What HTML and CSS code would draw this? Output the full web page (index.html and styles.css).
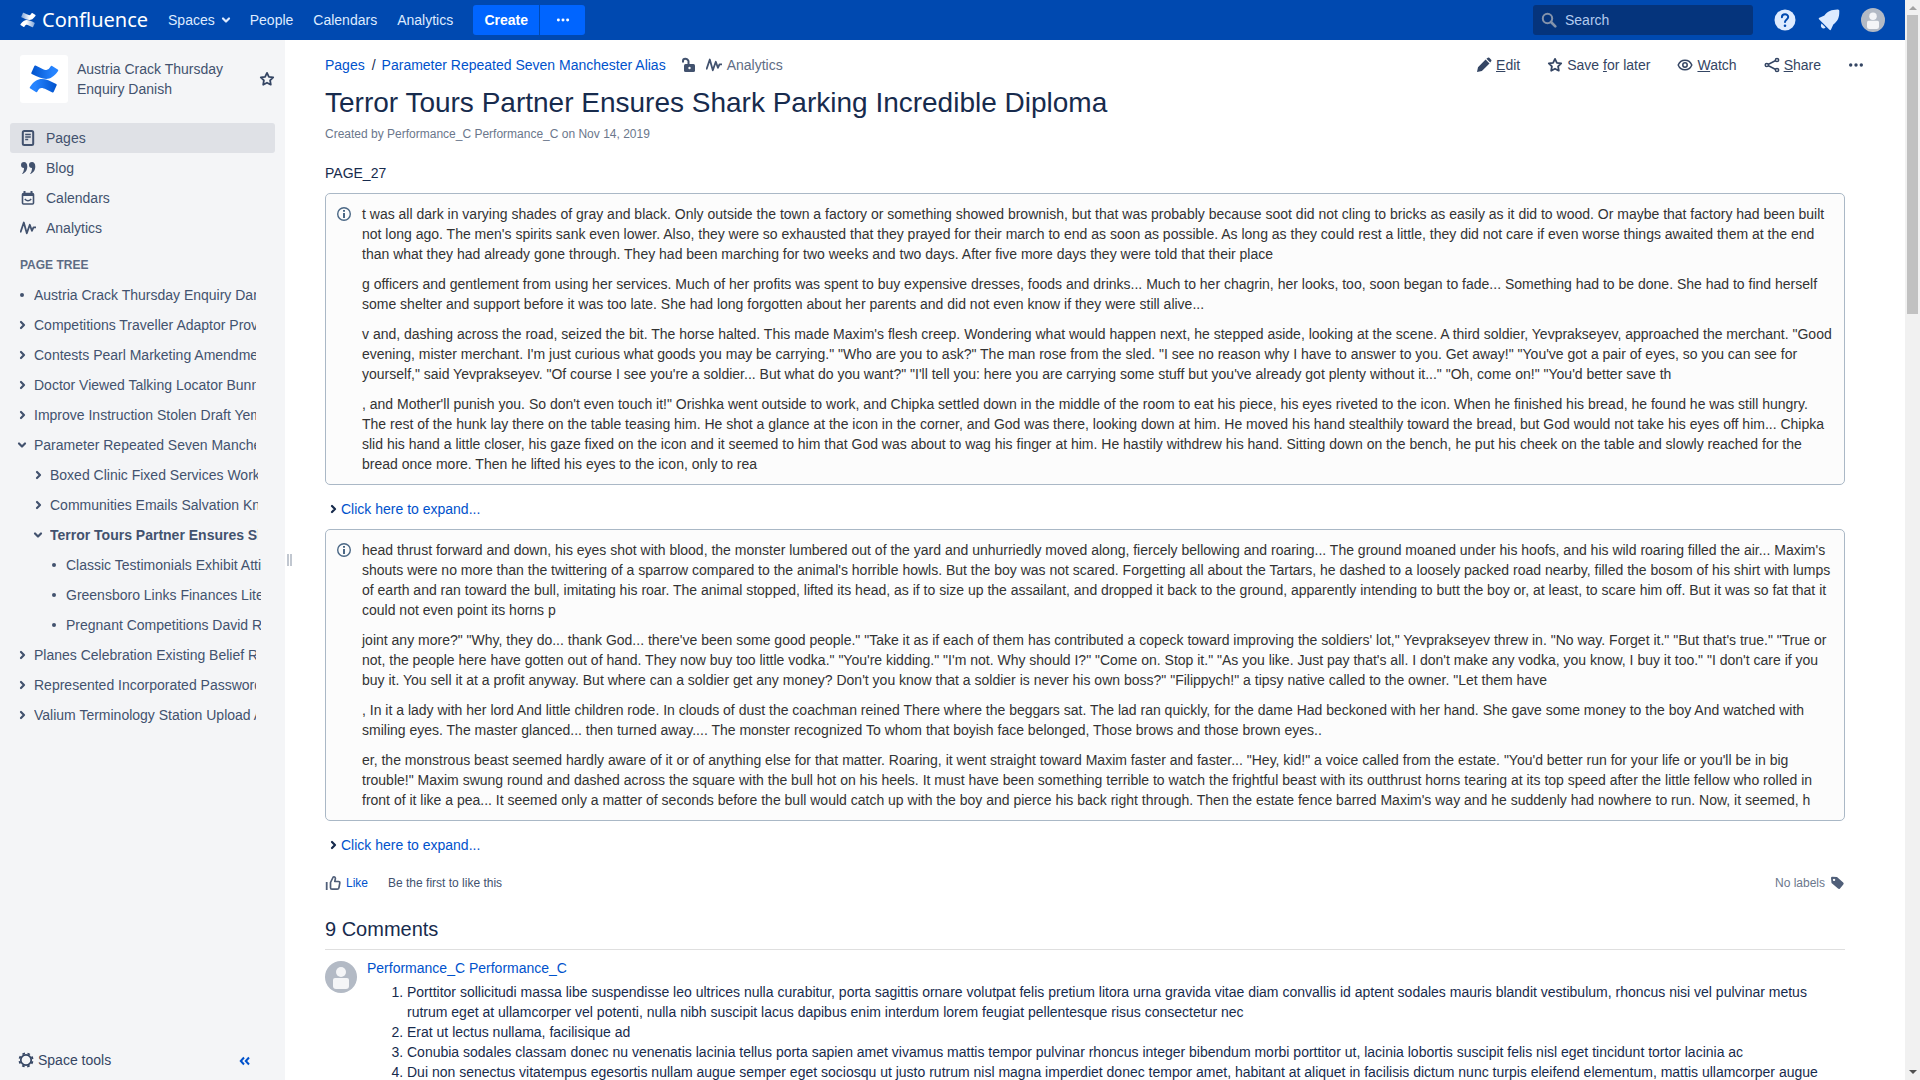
FILE: index.html
```html
<!DOCTYPE html>
<html lang="en">
<head>
<meta charset="utf-8">
<title>Terror Tours Partner Ensures Shark Parking Incredible Diploma - Confluence</title>
<link rel="stylesheet" href="styles.css">
</head>
<body>
<svg class="sprite" aria-hidden="true">
  <symbol id="chevron" viewBox="0 0 12 10"><path d="M5 2L8 5 5 8" fill="none" stroke="currentColor" stroke-width="2.200" stroke-linecap="round" stroke-linejoin="round"/></symbol>
  <symbol id="chevron-down" viewBox="0 0 12 10"><path d="M3 3.500L6 6.500 9 3.500" fill="none" stroke="currentColor" stroke-width="2.200" stroke-linecap="round" stroke-linejoin="round"/></symbol>
  <symbol id="star" viewBox="0 0 16 16"><path d="M8 1.900l1.900 3.900 4.300.6-3.100 3 .7 4.300L8 11.700l-3.800 2 .7-4.300-3.100-3 4.300-.6z" fill="none" stroke="currentColor" stroke-width="1.800" stroke-linejoin="round"/></symbol>
  <symbol id="pulse" viewBox="0 0 16 16"><path d="M.7 11.700L3.800 2.500l3 10.800L9.800 4.800l2.100 6 1.600-3.400h2" fill="none" stroke="currentColor" stroke-width="1.800" stroke-linejoin="round" stroke-linecap="round"/></symbol>
  <symbol id="dots" viewBox="0 0 16 16"><g fill="currentColor"><circle cx="2.700" cy="8" r="1.700"/><circle cx="8" cy="8" r="1.700"/><circle cx="13.300" cy="8" r="1.700"/></g></symbol>
  <symbol id="avatar" viewBox="0 0 32 32"><circle cx="16" cy="16" r="16" fill="#b3bac5"/><circle cx="16" cy="11" r="5" fill="#f4f5f7"/><path d="M8 19q0-2 2-2h12q2 0 2 2v6q0 3-3 3H11q-3 0-3-3z" fill="#f4f5f7"/></symbol>
  <symbol id="info" viewBox="0 0 16 16"><circle cx="8" cy="8" r="6.300" fill="none" stroke="#4a6785" stroke-width="1.400"/><path d="M7 4h2v1.800H7zM7 7h2v5H7z" fill="#4a6785"/></symbol>
  <symbol id="confluence-mark" viewBox="0 0 32 32"><path d="M1.200 24.200c-.3.500-.6 1.100-.2 1.700l6.300 4c.5.300 1.200.2 1.500-.4 2.600-4.400 4.300-4.800 9.700-2.200l6.500 3c.6.300 1.200 0 1.400-.6l3.100-7c.2-.5 0-1.200-.5-1.400C16.300 15 9.500 12.700 1.200 24.200z" fill="url(#mark-low)"/><path d="M30.800 7.800c.3-.5.600-1.100.2-1.700l-6.300-4c-.5-.3-1.200-.2-1.500.4-2.600 4.400-4.300 4.800-9.700 2.200L7 1.700c-.6-.3-1.200 0-1.400.6l-3.100 7c-.2.500 0 1.200.5 1.400C15.700 17 22.500 19.300 30.800 7.800z" fill="url(#mark-high)"/></symbol>
  <linearGradient id="mark-low" x1="1" y1="0" x2="0" y2="0"><stop offset="0" stop-color="var(--mark-deep)"/><stop offset=".8" stop-color="var(--mark-light)"/></linearGradient>
  <linearGradient id="mark-high" x1="0" y1="0" x2="1" y2="0"><stop offset="0" stop-color="var(--mark-deep)"/><stop offset=".8" stop-color="var(--mark-light)"/></linearGradient>
</svg>

<div class="app">
<div class="page">
  <header class="topbar">
    <a class="brand" href="#">
      <svg class="brand-mark" viewBox="0 0 32 32"><defs><linearGradient id="w1"><stop offset="0" stop-color="#fff" stop-opacity=".5"/><stop offset=".6" stop-color="#fff"/></linearGradient><linearGradient id="w2" x1="1" x2="0"><stop offset="0" stop-color="#fff" stop-opacity=".5"/><stop offset=".6" stop-color="#fff"/></linearGradient></defs><path d="M1.200 24.200c-.3.500-.6 1.100-.2 1.700l6.300 4c.5.300 1.200.2 1.500-.4 2.600-4.400 4.300-4.800 9.700-2.200l6.500 3c.6.300 1.200 0 1.400-.6l3.100-7c.2-.5 0-1.200-.5-1.400C16.300 15 9.500 12.700 1.200 24.200z" fill="url(#w2)"/><path d="M30.800 7.800c.3-.5.600-1.100.2-1.700l-6.300-4c-.5-.3-1.200-.2-1.500.4-2.600 4.400-4.300 4.800-9.700 2.200L7 1.700c-.6-.3-1.200 0-1.400.6l-3.100 7c-.2.500 0 1.200.5 1.400C15.700 17 22.500 19.300 30.800 7.800z" fill="url(#w1)"/></svg>
      <span>Confluence</span>
    </a>
    <nav class="topnav">
      <a href="#">Spaces <svg class="mark"><use href="#chevron-down"/></svg></a>
      <a href="#">People</a>
      <a href="#">Calendars</a>
      <a href="#">Analytics</a>
    </nav>
    <div class="create">
      <button class="create-main" type="button">Create</button>
      <button class="create-more" type="button" aria-label="Create from template"><svg class="icon"><use href="#dots"/></svg></button>
    </div>
    <div class="tools">
      <label class="search">
        <svg class="icon" viewBox="0 0 16 16"><circle cx="6.500" cy="6.500" r="4.700" fill="none" stroke="currentColor" stroke-width="2"/><path d="M10 10l4.300 4.300" stroke="currentColor" stroke-width="2.600" stroke-linecap="round"/></svg>
        <input type="search" placeholder="Search" aria-label="Search">
      </label>
      <button class="tool" type="button" aria-label="Help"><svg viewBox="0 0 24 24"><circle cx="12" cy="12" r="10.500" fill="#deebff"/><path d="M8.900 9.300c0-4 6.300-4 6.300-.2 0 2.300-3.200 2.400-3.200 5" fill="none" stroke="#0049b0" stroke-width="2" stroke-linecap="round"/><circle cx="12" cy="17.700" r="1.300" fill="#0049b0"/></svg></button>
      <button class="tool" type="button" aria-label="Notifications"><svg viewBox="0 0 24 24"><path d="M2 11.200c-.5-.6-.3-1.200.4-1.500l5-2.200C10.500 3 14.500 1.700 20.500 1.500c1.200-.2 2 .6 1.800 1.800.1 6-1.500 10-6 13.100L14 21.500c-.3.800-1 .9-1.500.3zM4.600 15.500l4 4c-1.200 1.400-3 1.300-3.800.3-1-1-1.300-2.800-.2-4.300z" fill="#deebff"/></svg></button>
      <button class="tool" type="button" aria-label="Profile"><svg><use href="#avatar"/></svg></button>
    </div>
  </header>

  <div class="body">
    <aside class="sidebar">
      <div class="space">
        <a class="space-logo" href="#" aria-label="Space home"><svg><use href="#confluence-mark"/></svg></a>
        <a class="space-name" href="#">Austria Crack Thursday Enquiry Danish</a>
        <button class="plain" type="button" aria-label="Add to My Spaces"><svg class="icon"><use href="#star"/></svg></button>
      </div>
      <nav class="sections">
        <a class="current" href="#"><svg class="icon" viewBox="0 0 16 16"><rect x="2.800" y="1" width="10.400" height="14" rx="1.500" fill="none" stroke="currentColor" stroke-width="2"/><path d="M5.200 4.500h5.600M5.200 7h5.600M5.200 9.500h3" stroke="currentColor" stroke-width="1.300"/></svg>Pages</a>
        <a href="#"><svg class="icon" viewBox="0 0 16 16"><path d="M1 5a3 3 0 0 1 3-3c2 0 3.300 1.600 3.300 4.500C7.300 10.500 5 13.300 2 14c1.200-1.500 2-3.500 2-6a3 3 0 0 1-3-3zM9 5a3 3 0 0 1 3-3c2 0 3.300 1.600 3.300 4.500 0 4-2.300 6.800-5.300 7.500 1.200-1.500 2-3.500 2-6a3 3 0 0 1-3-3z" fill="currentColor"/></svg>Blog</a>
        <a href="#"><svg class="icon" viewBox="0 0 16 16"><rect x="2.500" y="3.500" width="11" height="10.500" rx="1" fill="none" stroke="currentColor" stroke-width="1.600"/><path d="M2.500 5h11M4.500 1v3M11.500 1v3" stroke="currentColor" stroke-width="2"/><path d="M4.800 9q3.200 3.600 6.400 0" fill="none" stroke="currentColor" stroke-width="1.500"/></svg>Calendars</a>
        <a href="#"><svg class="icon"><use href="#pulse"/></svg>Analytics</a>
      </nav>
      <h2 class="tree-title">Page tree</h2>
      <ul class="tree">
        <li><span class="mark dot"></span><a href="#">Austria Crack Thursday Enquiry Danish</a></li>
        <li><svg class="mark"><use href="#chevron"/></svg><a href="#">Competitions Traveller Adaptor Provided</a></li>
        <li><svg class="mark"><use href="#chevron"/></svg><a href="#">Contests Pearl Marketing Amendment</a></li>
        <li><svg class="mark"><use href="#chevron"/></svg><a href="#">Doctor Viewed Talking Locator Bunny</a></li>
        <li><svg class="mark"><use href="#chevron"/></svg><a href="#">Improve Instruction Stolen Draft Yemen</a></li>
        <li><svg class="mark"><use href="#chevron-down"/></svg><a href="#">Parameter Repeated Seven Manchester Alias</a></li>
        <li class="level-2"><svg class="mark"><use href="#chevron"/></svg><a href="#">Boxed Clinic Fixed Services Workshop</a></li>
        <li class="level-2"><svg class="mark"><use href="#chevron"/></svg><a href="#">Communities Emails Salvation Knowing</a></li>
        <li class="level-2"><svg class="mark"><use href="#chevron-down"/></svg><a class="here" href="#">Terror Tours Partner Ensures Shark</a></li>
        <li class="level-3"><span class="mark dot"></span><a href="#">Classic Testimonials Exhibit Attitude</a></li>
        <li class="level-3"><span class="mark dot"></span><a href="#">Greensboro Links Finances Literacy</a></li>
        <li class="level-3"><span class="mark dot"></span><a href="#">Pregnant Competitions David Rapids</a></li>
        <li><svg class="mark"><use href="#chevron"/></svg><a href="#">Planes Celebration Existing Belief Rated</a></li>
        <li><svg class="mark"><use href="#chevron"/></svg><a href="#">Represented Incorporated Passwords</a></li>
        <li><svg class="mark"><use href="#chevron"/></svg><a href="#">Valium Terminology Station Upload Aims</a></li>
      </ul>
      <div class="sidebar-foot">
        <button class="plain" type="button"><svg class="icon" viewBox="0 0 16 16"><circle cx="8" cy="8" r="5.200" fill="none" stroke="currentColor" stroke-width="1.700"/><circle cx="8" cy="8" r="6.600" fill="none" stroke="currentColor" stroke-width="1.800" stroke-dasharray="2.600 2.584" stroke-dashoffset="-1.300"/></svg>Space tools</button>
        <button class="plain collapse" type="button" aria-label="Collapse sidebar"><svg viewBox="0 0 12 10"><path d="M5 1.500L1.800 5 5 8.500M10 1.500L6.800 5 10 8.500" fill="none" stroke="currentColor" stroke-width="2"/></svg></button>
      </div>
    </aside>
    <div class="splitter"><span></span></div>

    <main class="content">
      <div class="page-head">
        <nav class="crumbs">
          <a href="#">Pages</a><span>/</span><a href="#">Parameter Repeated Seven Manchester Alias</a>
          <button class="plain lock" type="button" aria-label="Unrestricted"><svg class="icon" viewBox="0 0 16 16"><rect x="4" y="7" width="11" height="8" rx="1.500" fill="currentColor"/><path d="M3 5.500V4q0-2.300 2.300-2.300T8.500 4v4" fill="none" stroke="currentColor" stroke-width="2"/><circle cx="9.500" cy="11" r="1.200" fill="#fff"/></svg></button>
          <button class="plain stats" type="button"><svg class="icon"><use href="#pulse"/></svg>Analytics</button>
        </nav>
        <div class="actions">
          <button class="plain" type="button"><svg class="icon" viewBox="0 0 16 16"><path d="M1 15l1-4.800 7.600-7.600 3.900 3.900-7.600 7.600zM10.400 1.800l1.400-1q.8-.6 1.500 0l1.900 1.900q.6.700 0 1.500l-1 1.400z" fill="currentColor"/></svg><span><u>E</u>dit</span></button>
          <button class="plain" type="button"><svg class="icon"><use href="#star"/></svg><span>Save <u>f</u>or later</span></button>
          <button class="plain" type="button"><svg class="icon" viewBox="0 0 16 16"><path d="M1.200 8C3.800 1.600 12.200 1.600 14.800 8 12.200 14.400 3.800 14.400 1.200 8z" fill="none" stroke="currentColor" stroke-width="1.500"/><circle cx="8" cy="8" r="2.200" fill="none" stroke="currentColor" stroke-width="1.500"/></svg><span><u>W</u>atch</span></button>
          <button class="plain" type="button"><svg class="icon" viewBox="0 0 16 16"><path d="M12.700 3L3 8l9.700 5" fill="none" stroke="currentColor" stroke-width="1.500"/><g fill="#fff" stroke="currentColor" stroke-width="1.500"><circle cx="13" cy="3" r="1.600"/><circle cx="2.800" cy="8" r="1.600"/><circle cx="13" cy="13" r="1.600"/></g></svg><span><u>S</u>hare</span></button>
          <button class="plain" type="button" aria-label="More actions"><svg class="icon"><use href="#dots"/></svg></button>
        </div>
      </div>
      <h1>Terror Tours Partner Ensures Shark Parking Incredible Diploma</h1>
      <p class="byline">Created by Performance_C Performance_C on Nov 14, 2019</p>

      <p class="lead">PAGE_27</p>
      <section class="panel">
        <svg class="icon"><use href="#info"/></svg>
        <div class="panel-text">
          <p>t was all dark in varying shades of gray and black. Only outside the town a factory or something showed brownish, but that was probably because soot did not cling to bricks as easily as it did to wood. Or maybe that factory had been built not long ago. The men's spirits sank even lower. Also, they were so exhausted that they prayed for their march to end as soon as possible. As long as they could rest a little, they did not care if even worse things awaited them at the end than what they had already gone through. They had been marching for two weeks and two days. After five more days they were told that their place</p>
          <p>g officers and gentlement from using her services. Much of her profits was spent to buy expensive dresses, foods and drinks... Much to her chagrin, her looks, too, soon began to fade... Something had to be done. She had to find herself some shelter and support before it was too late. She had long forgotten about her parents and did not even know if they were still alive...</p>
          <p>v and, dashing across the road, seized the bit. The horse halted. This made Maxim's flesh creep. Wondering what would happen next, he stepped aside, looking at the scene. A third soldier, Yevprakseyev, approached the merchant. "Good evening, mister merchant. I'm just curious what goods you may be carrying." "Who are you to ask?" The man rose from the sled. "I see no reason why I have to answer to you. Get away!" "You've got a pair of eyes, so you can see for yourself," said Yevprakseyev. "Of course I see you're a soldier... But what do you want?" "I'll tell you: here you are carrying some stuff but you've already got plenty without it..." "Oh, come on!" "You'd better save th</p>
          <p>, and Mother'll punish you. So don't even touch it!" Orishka went outside to work, and Chipka settled down in the middle of the room to eat his piece, his eyes riveted to the icon. When he finished his bread, he found he was still hungry. The rest of the hunk lay there on the table teasing him. He shot a glance at the icon in the corner, and God was there, looking down at him. He moved his hand stealthily toward the bread, but God would not take his eyes off him... Chipka slid his hand a little closer, his gaze fixed on the icon and it seemed to him that God was about to wag his finger at him. He hastily withdrew his hand. Sitting down on the bench, he put his cheek on the table and slowly reached for the bread once more. Then he lifted his eyes to the icon, only to rea</p>
        </div>
      </section>
      <button class="expand" type="button"><svg class="mark"><use href="#chevron"/></svg><span>Click here to expand...</span></button>
      <section class="panel">
        <svg class="icon"><use href="#info"/></svg>
        <div class="panel-text">
          <p>head thrust forward and down, his eyes shot with blood, the monster lumbered out of the yard and unhurriedly moved along, fiercely bellowing and roaring... The ground moaned under his hoofs, and his wild roaring filled the air... Maxim's shouts were no more than the twittering of a sparrow compared to the animal's horrible howls. But the boy was not scared. Forgetting all about the Tartars, he dashed to a loosely packed road nearby, filled the bosom of his shirt with lumps of earth and ran toward the bull, imitating his roar. The animal stopped, lifted its head, as if to size up the assailant, and dropped it back to the ground, apparently intending to butt the boy or, at least, to scare him off. But it was so fat that it could not even point its horns p</p>
          <p>joint any more?" "Why, they do... thank God... there've been some good people." "Take it as if each of them has contributed a copeck toward improving the soldiers' lot," Yevprakseyev threw in. "No way. Forget it." "But that's true." "True or not, the people here have gotten out of hand. They now buy too little vodka." "You're kidding." "I'm not. Why should I?" "Come on. Stop it." "As you like. Just pay that's all. I don't make any vodka, you know, I buy it too." "I don't care if you buy it. You sell it at a profit anyway. But where can a soldier get any money? Don't you know that a soldier is never his own boss?" "Filippych!" a tipsy native called to the owner. "Let them have</p>
          <p>, In it a lady with her lord And little children rode. In clouds of dust the coachman reined There where the beggars sat. The lad ran quickly, for the dame Had beckoned with her hand. She gave some money to the boy And watched with smiling eyes. The master glanced... then turned away.... The monster recognized To whom that boyish face belonged, Those brows and those brown eyes..</p>
          <p>er, the monstrous beast seemed hardly aware of it or of anything else for that matter. Roaring, it went straight toward Maxim faster and faster... "Hey, kid!" a voice called from the estate. "You'd better run for your life or you'll be in big trouble!" Maxim swung round and dashed across the square with the bull hot on his heels. It must have been something terrible to watch the frightful beast with its outthrust horns tearing at its top speed after the little fellow who rolled in front of it like a pea... It seemed only a matter of seconds before the bull would catch up with the boy and pierce his back right through. Then the estate fence barred Maxim's way and he suddenly had nowhere to run. Now, it seemed, h</p>
        </div>
      </section>
      <button class="expand" type="button"><svg class="mark"><use href="#chevron"/></svg><span>Click here to expand...</span></button>

      <div class="feedback">
        <button class="plain like" type="button"><svg class="icon" viewBox="0 0 16 16"><path d="M5.500 7.500L8.200 2q2.200-.6 2.200 1.600L9.800 6.500h3.600q1.600 0 1.400 1.600l-.9 4.700q-.3 1.400-1.700 1.400H7q-1.500 0-1.500-1.500z" fill="none" stroke="currentColor" stroke-width="1.700" stroke-linejoin="round"/><path d="M1.700 7v8" stroke="currentColor" stroke-width="1.800"/></svg><span>Like</span></button>
        <span class="like-note">Be the first to like this</span>
        <span class="labels">No labels</span>
        <button class="plain" type="button" aria-label="Edit labels"><svg class="icon" viewBox="0 0 16 16"><path fill-rule="evenodd" d="M2 3q0-1.300 1.300-1.300L8 2l6.200 5.500q1 1 .1 2L11 13.500q-1 1-2 .1L2.500 8zM5 3.700a1.200 1.200 0 1 0 .1 0z" fill="currentColor"/></svg></button>
      </div>

      <h2 class="comments-title">9 Comments</h2>
      <article class="comment">
        <svg class="comment-avatar"><use href="#avatar"/></svg>
        <div class="comment-text">
          <a href="#">Performance_C Performance_C</a>
          <ol>
            <li>Porttitor sollicitudi massa libe suspendisse leo ultrices nulla curabitur, porta sagittis ornare volutpat felis pretium litora urna gravida vitae diam convallis id aptent sodales mauris blandit vestibulum, rhoncus nisi vel pulvinar metus rutrum eget at ullamcorper vel potenti, nulla nibh suscipit lacus dapibus enim interdum lorem feugiat pellentesque risus consectetur nec</li>
            <li>Erat ut lectus nullama, facilisique ad</li>
            <li>Conubia sodales classam donec nu venenatis lacinia tellus porta sapien amet vivamus mattis tempor pulvinar rhoncus integer bibendum morbi porttitor ut, lacinia lobortis suscipit felis nisl eget tincidunt tortor lacinia ac</li>
            <li>Dui non senectus vitatempus egesortis nullam augue semper eget sociosqu ut justo rutrum nisl magna imperdiet donec tempor amet, habitant at aliquet in facilisis dictum nunc turpis eleifend elementum, mattis ullamcorper augue</li>
          </ol>
        </div>
      </article>
    </main>
  </div>
</div>
<div class="scrollbar" aria-hidden="true"><i class="up"></i><i class="thumb"></i><i class="down"></i></div>
</div>
</body>
</html>
```
FILE: styles.css
```css
:root {
  --navy: #172b4d;
  --slate: #42526e;
  --link: #0052cc;
  --mark-deep: #0052cc;
  --mark-light: #2684ff;
}
* { box-sizing: border-box; }
body {
  margin: 0;
  font: 14px/20px "Liberation Sans", Arial, sans-serif;
  color: var(--navy);
  background: #fff;
}
a { color: var(--link); text-decoration: none; }
button, input { font: inherit; }
h1, h2, p, ul, ol { margin: 0; padding: 0; font-weight: 400; }
svg { display: block; flex: none; }
.sprite { position: absolute; width: 0; height: 0; }
.icon { width: 16px; height: 16px; }
.plain {
  display: flex;
  align-items: center;
  padding: 0;
  border: 0;
  background: none;
  color: #344563;
}

.app { display: flex; height: 100vh; overflow: hidden; }
.page { flex: 1; min-width: 0; display: flex; flex-direction: column; }

/* Top bar */
.topbar {
  flex: none;
  display: flex;
  align-items: center;
  height: 40px;
  padding: 0 20px;
  background: #0049b0;
}
.brand {
  display: flex;
  align-items: center;
  gap: 6px;
  color: #fff;
  font: 20px/30px "Noto Sans", "Open Sans", sans-serif;
}
.brand-mark { width: 16px; height: 18px; }
.topnav { display: flex; gap: 20px; margin-left: 20px; }
.topnav a { display: flex; align-items: center; gap: 5px; color: #deebff; }
.topnav .mark { margin-right: -2px; }
.create { display: flex; gap: 1px; margin-left: 20px; }
.create button {
  display: flex;
  align-items: center;
  justify-content: center;
  height: 30px;
  padding: 0;
  border: 0;
  background: #0065ff;
  color: #fff;
  font-weight: 700;
}
.create-main { width: 66px; border-radius: 3px 0 0 3px; }
.create-more { width: 45px; border-radius: 0 3px 3px 0; }
.create .icon { width: 14px; height: 14px; }
.tools { display: flex; align-items: center; gap: 20px; margin-left: auto; }
.search {
  display: flex;
  align-items: center;
  gap: 8px;
  width: 220px;
  height: 30px;
  padding: 0 8px;
  border-radius: 3px;
  background: #05347c;
  color: #8493ab;
}
.search input {
  flex: 1;
  min-width: 0;
  padding: 0;
  border: 0;
  outline: 0;
  background: none;
  color: #deebff;
}
.search input::placeholder { color: #b3cbef; }
.tool { width: 24px; height: 24px; padding: 0; border: 0; background: none; }
.tool svg { width: 24px; height: 24px; }

.body { flex: 1; min-height: 0; display: flex; }

/* Sidebar */
.sidebar {
  flex: none;
  display: flex;
  flex-direction: column;
  width: 285px;
  padding: 15px 10px 10px;
  background: #f4f5f7;
  color: var(--slate);
}
.sidebar a { color: var(--slate); }
.space { display: flex; align-items: center; padding: 0 0 0 10px; }
.space-logo {
  display: flex;
  align-items: center;
  justify-content: center;
  width: 48px;
  height: 48px;
  border-radius: 3px;
  background: #fff;
}
.space-logo svg { width: 30px; height: 30px; }
.space-name { flex: 1; padding: 0 20px 0 9px; }
.sections { margin-top: 20px; }
.sections a {
  display: flex;
  align-items: center;
  gap: 10px;
  height: 30px;
  padding: 0 10px;
  border-radius: 3px;
}
.sections .current { background: #dfe1e6; }
.tree-title {
  margin: 12px 0 5px;
  padding: 0 10px;
  color: #5e6c84;
  font-size: 12px;
  font-weight: 700;
  text-transform: uppercase;
}
.tree { list-style: none; }
.tree li {
  display: flex;
  align-items: center;
  gap: 6px;
  height: 30px;
  padding: 0 19px 0 6px;
}
.tree .level-2 { padding: 0 17px 0 22px; }
.tree .level-3 { padding: 0 14px 0 38px; }
.tree a { flex: 1; min-width: 0; overflow: hidden; white-space: nowrap; }
.tree .here { font-weight: 700; }
.mark { width: 12px; height: 10px; }
.dot { flex: none; display: flex; align-items: center; justify-content: center; }
.dot::before { content: ""; width: 4px; height: 4px; border-radius: 50%; background: var(--slate); }
.sidebar-foot {
  display: flex;
  align-items: center;
  justify-content: space-between;
  margin-top: auto;
  padding: 0 24px 0 8px;
}
.sidebar-foot .plain { gap: 4px; }
.sidebar-foot .collapse { padding-top: 2px; color: var(--link); }
.collapse svg { width: 12px; height: 10px; }
.splitter { flex: none; display: flex; align-items: center; width: 10px; padding-left: 2px; }
.splitter span {
  width: 5px;
  height: 12px;
  border: solid #c1c7d0;
  border-width: 0 2px;
}

/* Page */
.content { flex: 1; min-width: 0; overflow: hidden; padding: 15px 60px 0 30px; }
.page-head { display: flex; justify-content: space-between; margin-right: -19px; }
.crumbs { display: flex; align-items: center; }
.crumbs > span { padding: 0 6px 0 7px; }
.crumbs .lock { margin-left: 14px; color: var(--slate); }
.crumbs .stats { gap: 5px; margin-left: 10px; color: #5e6c84; }
.stats .icon { color: var(--slate); }
.actions { display: flex; gap: 27px; }
.actions .plain { gap: 4px; }
h1 { margin-top: 12px; font-size: 28px; line-height: 32px; }
.byline { margin-top: 5px; color: #6b778c; font-size: 12px; }
.lead { margin-top: 19px; }
.panel {
  display: flex;
  gap: 10px;
  margin-top: 10px;
  padding: 10px;
  border: 1px solid #aab8c6;
  border-radius: 5px;
  background: #fcfcfc;
  color: #333;
}
.panel .icon { margin-top: 2px; }
.panel-text { display: grid; gap: 10px; }
.expand {
  display: flex;
  align-items: center;
  gap: 2px;
  margin-top: 14px;
  padding: 0 0 0 2px;
  border: 0;
  background: none;
  color: var(--navy);
}
.expand span { color: var(--link); }
.feedback { display: flex; align-items: center; margin-top: 18px; font-size: 12px; }
.feedback .plain { color: #505f79; }
.like { gap: 5px; }
.like span { color: var(--link); }
.like-note { margin-left: 20px; color: var(--slate); }
.labels { margin: 0 4px 0 auto; color: #6b778c; }
.comments-title {
  margin-top: 24px;
  padding-bottom: 8px;
  border-bottom: 1px solid #dfdfdf;
  font-size: 20px;
  line-height: 24px;
}
.comment { display: flex; gap: 10px; padding-top: 8px; }
.comment-avatar { width: 32px; height: 32px; margin-top: 3px; }
.comment ol { margin-top: 4px; padding-left: 40px; }

/* Scroll bar */
.scrollbar {
  flex: none;
  display: flex;
  flex-direction: column;
  align-items: center;
  width: 15px;
  padding: 6px 0;
  background: #f1f1f1;
}
.up, .down { border: solid transparent; border-width: 0 4px; }
.up { border-bottom: 4px solid #a3a3a3; }
.down { margin-top: auto; border-top: 4px solid #505050; }
.thumb { width: 11px; height: 28%; margin-top: 5px; background: #c1c1c1; }
```
